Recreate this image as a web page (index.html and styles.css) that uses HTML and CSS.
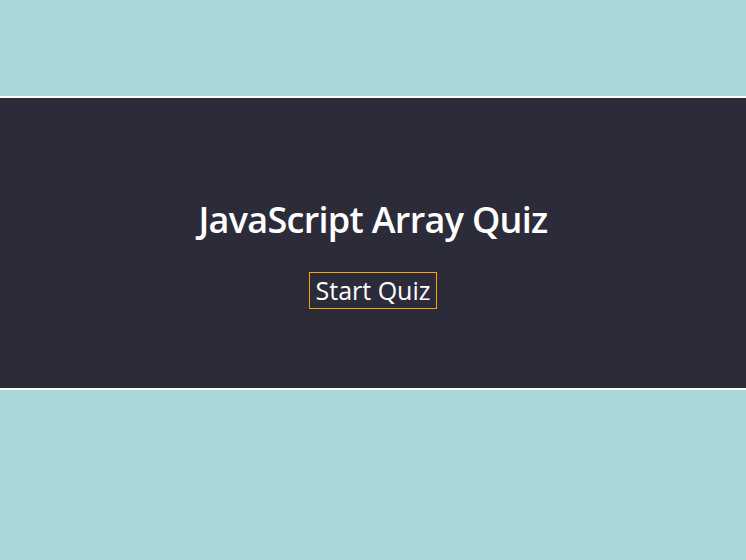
FILE: index.html
```html
<!DOCTYPE html>
<html>
<head>
<meta charset="utf-8">
<link rel="stylesheet" href="styles.css">
</head>
<body>
<main class="panel">
  <h1 class="title">JavaScript Array Quiz</h1>
  <button class="start" type="button">Start Quiz</button>
</main>
</body>
</html>
```
FILE: styles.css
```css
html, body {
  margin: 0;
  padding: 0;
  background: #a9d6d9;
  font-family: "Open Sans", sans-serif;
}
.panel {
  margin-top: 96px;
  border-top: 2px solid #ffffff;
  border-bottom: 2px solid #ffffff;
  background: #2c2b3a;
  display: flex;
  flex-direction: column;
  align-items: center;
  padding-top: 97px;
  box-sizing: content-box;
  height: 193px;
}
.title {
  margin: 0;
  font-size: 36px;
  font-weight: 600;
  color: #ffffff;
  line-height: 49px;
  letter-spacing: -0.7px;
}
.start {
  -webkit-appearance: none;
  appearance: none;
  margin-top: 28px;
  font-family: "Open Sans", sans-serif;
  font-size: 25px;
  line-height: 33px;
  color: #ffffff;
  background: transparent;
  border-width: 1px;
  border-style: solid;
  border-color: #ffa500;
  border-radius: 0;
  padding: 1px 6px;
  cursor: pointer;
}
```
